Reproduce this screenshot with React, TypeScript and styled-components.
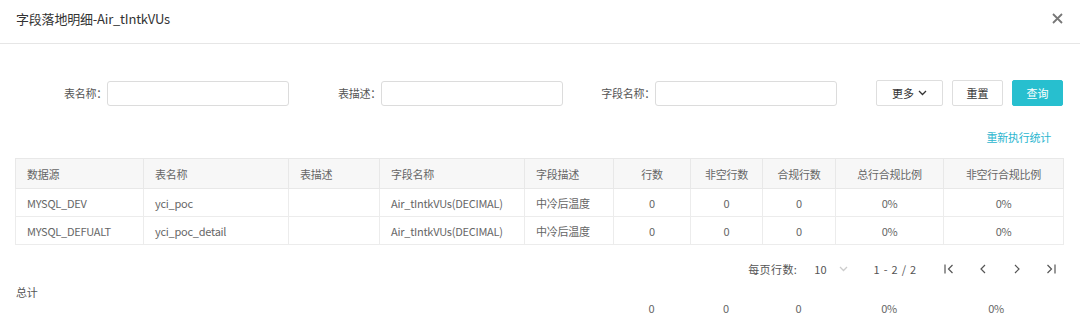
import React from "react";
import styled, { createGlobalStyle } from "styled-components";

const GlobalStyle = createGlobalStyle`
  html, body {
    margin: 0;
    padding: 0;
    background: #fff;
  }
  body {
    font-family: "Noto Sans CJK SC", "Noto Sans", sans-serif;
    font-size: 11px;
    letter-spacing: -0.25px;
    color: #666;
  }
  * {
    box-sizing: border-box;
  }
`;

type Row = {
  source: string;
  table: string;
  desc: string;
  field: string;
  fieldDesc: string;
  rows: number;
  nonEmpty: number;
  valid: number;
  totalRatio: string;
  nonEmptyRatio: string;
};

const rows: Row[] = [
  {
    source: "MYSQL_DEV",
    table: "yci_poc",
    desc: "",
    field: "Air_tIntkVUs(DECIMAL)",
    fieldDesc: "中冷后温度",
    rows: 0,
    nonEmpty: 0,
    valid: 0,
    totalRatio: "0%",
    nonEmptyRatio: "0%",
  },
  {
    source: "MYSQL_DEFUALT",
    table: "yci_poc_detail",
    desc: "",
    field: "Air_tIntkVUs(DECIMAL)",
    fieldDesc: "中冷后温度",
    rows: 0,
    nonEmpty: 0,
    valid: 0,
    totalRatio: "0%",
    nonEmptyRatio: "0%",
  },
];

const colWidths = [128, 145, 91, 145, 89, 77, 72, 73, 108, 120];

const Cols = () => (
  <colgroup>
    {colWidths.map((w, i) => (
      <col key={i} style={{ width: w }} />
    ))}
  </colgroup>
);

const CloseIcon = () => (
  <svg width="11" height="11" viewBox="0 0 11 11">
    <path d="M1 1 L10 10 M10 1 L1 10" stroke="#777" strokeWidth="1.8" />
  </svg>
);

const ChevronDown = ({ color = "#333" }: { color?: string }) => (
  <svg width="9" height="6" viewBox="0 0 9 6">
    <path d="M1 1 L4.5 4.5 L8 1" fill="none" stroke={color} strokeWidth="1.3" />
  </svg>
);

const PageIcon = ({ kind }: { kind: "first" | "prev" | "next" | "last" }) => (
  <svg width="12" height="12" viewBox="0 0 12 12">
    {kind === "first" && (
      <>
        <path d="M2 1.5 V10.5" stroke="#555" strokeWidth="1.2" />
        <path d="M9.5 2 L5.5 6 L9.5 10" fill="none" stroke="#555" strokeWidth="1.2" />
      </>
    )}
    {kind === "prev" && (
      <path d="M8 2 L4 6 L8 10" fill="none" stroke="#555" strokeWidth="1.2" />
    )}
    {kind === "next" && (
      <path d="M4 2 L8 6 L4 10" fill="none" stroke="#555" strokeWidth="1.2" />
    )}
    {kind === "last" && (
      <>
        <path d="M2.5 2 L6.5 6 L2.5 10" fill="none" stroke="#555" strokeWidth="1.2" />
        <path d="M10 1.5 V10.5" stroke="#555" strokeWidth="1.2" />
      </>
    )}
  </svg>
);

const App: React.FC = () => {
  return (
    <>
      <GlobalStyle />
      <Modal>
        <Header>
          <Title>字段落地明细-Air_tIntkVUs</Title>
          <CloseButton aria-label="关闭">
            <CloseIcon />
          </CloseButton>
        </Header>
        <Body>
          <FilterRow>
            <Field>
              <FieldLabel>表名称：</FieldLabel>
              <Input />
            </Field>
            <Field>
              <FieldLabel>表描述：</FieldLabel>
              <Input />
            </Field>
            <Field>
              <FieldLabel>字段名称：</FieldLabel>
              <Input />
            </Field>
            <Actions>
              <Button $width={67}>
                更多 <ChevronDown />
              </Button>
              <Button $width={51}>重置</Button>
              <Button $width={51} $primary>
                查询
              </Button>
            </Actions>
          </FilterRow>
          <LinkRow>
            <Link>重新执行统计</Link>
          </LinkRow>
          <Table>
            <Cols />
            <thead>
              <tr>
                <Th>数据源</Th>
                <Th>表名称</Th>
                <Th>表描述</Th>
                <Th>字段名称</Th>
                <Th>字段描述</Th>
                <Th $center>行数</Th>
                <Th $center>非空行数</Th>
                <Th $center>合规行数</Th>
                <Th $center>总行合规比例</Th>
                <Th $center>非空行合规比例</Th>
              </tr>
            </thead>
            <tbody>
              {rows.map((r) => (
                <tr key={r.table}>
                  <Td>{r.source}</Td>
                  <Td>{r.table}</Td>
                  <Td>{r.desc}</Td>
                  <Td>{r.field}</Td>
                  <Td>{r.fieldDesc}</Td>
                  <Td $center>{r.rows}</Td>
                  <Td $center>{r.nonEmpty}</Td>
                  <Td $center>{r.valid}</Td>
                  <Td $center>{r.totalRatio}</Td>
                  <Td $center>{r.nonEmptyRatio}</Td>
                </tr>
              ))}
            </tbody>
          </Table>
          <Pager>
            <PagerLabel>每页行数:</PagerLabel>
            <PageSize>
              10 <ChevronDown color="#ccc" />
            </PageSize>
            <PageRange>1 - 2 / 2</PageRange>
            <PageButtons>
              <PageButton>
                <PageIcon kind="first" />
              </PageButton>
              <PageButton>
                <PageIcon kind="prev" />
              </PageButton>
              <PageButton>
                <PageIcon kind="next" />
              </PageButton>
              <PageButton>
                <PageIcon kind="last" />
              </PageButton>
            </PageButtons>
          </Pager>
          <TotalLabel>总计</TotalLabel>
          <TotalTable>
            <Cols />
            <tbody>
              <tr>
                <td />
                <td />
                <td />
                <td />
                <td />
                <TotalCell>0</TotalCell>
                <TotalCell>0</TotalCell>
                <TotalCell>0</TotalCell>
                <TotalCell>0%</TotalCell>
                <TotalCell $shift={7}>0%</TotalCell>
              </tr>
            </tbody>
          </TotalTable>
        </Body>
      </Modal>
    </>
  );
};

const Modal = styled.div`
  width: 1080px;
  height: 324px;
  overflow: hidden;
  background: #fff;
`;

const Header = styled.div`
  height: 44px;
  display: flex;
  align-items: center;
  justify-content: space-between;
  padding: 0 16px 7px 16px;
  border-bottom: 1px solid #e6e6e6;
`;

const Title = styled.div`
  font-size: 13px;
  letter-spacing: -0.2px;
  color: #333;
`;

const CloseButton = styled.button`
  border: none;
  background: none;
  padding: 0;
  margin-right: 1px;
  display: flex;
  cursor: pointer;
`;

const Body = styled.div`
  padding: 36px 17px 0 15px;
`;

const FilterRow = styled.div`
  display: flex;
  align-items: center;
  height: 26px;
`;

const Field = styled.div`
  width: 274px;
  display: flex;
  align-items: center;
`;

const FieldLabel = styled.label`
  flex: 0 0 92px;
  text-align: right;
  color: #555;
`;

const Input = styled.input`
  flex: 1;
  height: 25px;
  border: 1px solid #dcdcdc;
  border-radius: 3px;
  outline: none;
  font-size: 11px;
  padding: 0 8px;
`;

const Actions = styled.div`
  margin-left: auto;
  display: flex;
  gap: 9px;
`;

const Button = styled.button<{ $width: number; $primary?: boolean }>`
  width: ${(p) => p.$width}px;
  height: 26px;
  display: flex;
  align-items: center;
  justify-content: center;
  gap: 4px;
  font-family: inherit;
  font-size: 11px;
  border-radius: 2px;
  cursor: pointer;
  border: 1px solid ${(p) => (p.$primary ? "#27bfcf" : "#dedede")};
  background: ${(p) => (p.$primary ? "#27bfcf" : "#fff")};
  color: ${(p) => (p.$primary ? "#fff" : "#333")};
`;

const LinkRow = styled.div`
  display: flex;
  justify-content: flex-end;
  padding: 23px 12px 0 0;
  height: 52px;
`;

const Link = styled.a`
  color: #2cb6cf;
  cursor: pointer;
  line-height: 16px;
`;

const Table = styled.table`
  width: 1048px;
  table-layout: fixed;
  border-collapse: collapse;
  border: 1px solid #e8e8e8;
`;

const Th = styled.th<{ $center?: boolean }>`
  height: 30px;
  background: #f7f7f7;
  font-weight: normal;
  color: #666;
  font-size: 11px;
  text-align: ${(p) => (p.$center ? "center" : "left")};
  padding: 0 11px;
  border: 1px solid #e8e8e8;
`;

const Td = styled.td<{ $center?: boolean }>`
  height: 28px;
  color: #666;
  text-align: ${(p) => (p.$center ? "center" : "left")};
  padding: 0 11px;
  border: 1px solid #ececec;
  white-space: nowrap;
`;

const Pager = styled.div`
  display: flex;
  align-items: center;
  justify-content: flex-end;
  height: 48px;
  padding-right: 6px;
  color: #555;
  letter-spacing: 0;
`;

const PagerLabel = styled.span`
  letter-spacing: 0.4px;
`;

const PageSize = styled.span`
  display: flex;
  align-items: center;
  gap: 12px;
  margin-left: 17px;
`;

const PageRange = styled.span`
  margin-left: 26px;
  letter-spacing: 0.8px;
`;

const PageButtons = styled.div`
  display: flex;
  gap: 22px;
  margin-left: 26px;
`;

const PageButton = styled.button`
  border: none;
  background: none;
  padding: 0;
  display: flex;
  cursor: pointer;
`;

const TotalLabel = styled.div`
  padding-left: 1px;
  color: #555;
  line-height: 18px;
  margin-top: -10px;
`;

const TotalTable = styled.table`
  width: 1048px;
  table-layout: fixed;
  border-collapse: collapse;
  margin-top: 0;
`;

const TotalCell = styled.td<{ $shift?: number }>`
  height: 14px;
  line-height: 14px;
  padding: 0 ${(p) => 11 + (p.$shift ?? 0) * 2}px 0 11px;
  text-align: center;
  color: #666;
`;

export default App;
